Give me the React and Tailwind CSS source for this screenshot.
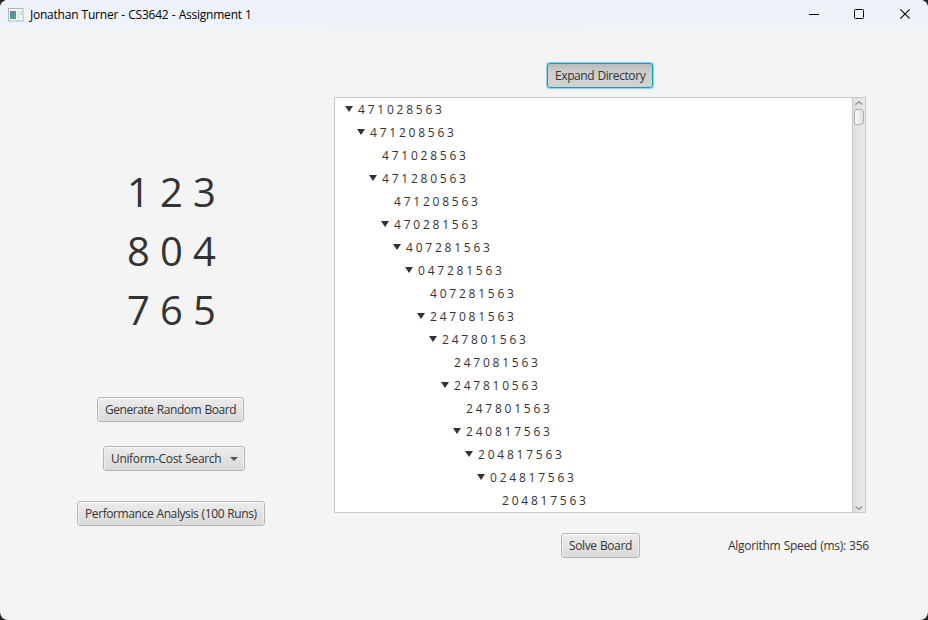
import React from "react";

const rows = [
  ["4 7 1 0 2 8 5 6 3", true, 0],
  ["4 7 1 2 0 8 5 6 3", true, 1],
  ["4 7 1 0 2 8 5 6 3", false, 2],
  ["4 7 1 2 8 0 5 6 3", true, 2],
  ["4 7 1 2 0 8 5 6 3", false, 3],
  ["4 7 0 2 8 1 5 6 3", true, 3],
  ["4 0 7 2 8 1 5 6 3", true, 4],
  ["0 4 7 2 8 1 5 6 3", true, 5],
  ["4 0 7 2 8 1 5 6 3", false, 6],
  ["2 4 7 0 8 1 5 6 3", true, 6],
  ["2 4 7 8 0 1 5 6 3", true, 7],
  ["2 4 7 0 8 1 5 6 3", false, 8],
  ["2 4 7 8 1 0 5 6 3", true, 8],
  ["2 4 7 8 0 1 5 6 3", false, 9],
  ["2 4 0 8 1 7 5 6 3", true, 9],
  ["2 0 4 8 1 7 5 6 3", true, 10],
  ["0 2 4 8 1 7 5 6 3", true, 11],
  ["2 0 4 8 1 7 5 6 3", false, 12],
];

function Button({ className, children }) {
  return (
    <button
      className={
        "flex h-[25px] shrink-0 items-center whitespace-nowrap rounded-[3px] border border-[#b5b5b5] bg-linear-to-b from-[#ececec] to-[#dadada] pl-[7px] shadow-[inset_0_1px_0_#fafafa,inset_1px_0_0_#f0f0f0,inset_-1px_0_0_#f0f0f0] " +
        className
      }
    >
      {children}
    </button>
  );
}

function TitleBar() {
  return (
    <header className="flex h-[29px] shrink-0 items-center bg-linear-to-r from-[#eef2fa] to-[#edf3f8] pl-2 text-black">
      <svg width="16" height="14" viewBox="0 0 16 14" className="mr-[6px] shrink-0">
        <defs>
          <linearGradient id="pane" x1="0" y1="0" x2="1" y2="1">
            <stop offset="0" stopColor="#4d83b0" />
            <stop offset="1" stopColor="#5ba67c" />
          </linearGradient>
        </defs>
        <rect x=".5" y=".5" width="14.5" height="12.5" fill="#f7f8f8" stroke="#b4b7ba" />
        <rect x="2" y="3" width="6" height="8" fill="url(#pane)" />
        <rect x="9" y="3" width="3" height="8" fill="#e4e8e9" />
        <rect x="12.5" y="3" width="1.5" height="4" fill="#c1dbd3" />
      </svg>
      <span className="flex-1 whitespace-nowrap text-[12px] leading-[16px] tracking-[-0.23px] [word-spacing:0.4px]">
        Jonathan Turner - CS3642 - Assignment 1
      </span>
      <svg width="120" height="29" viewBox="0 0 120 29" fill="none" stroke="#000" className="shrink-0">
        <path d="M1 14.5h10" />
        <rect x="46.5" y="9.5" width="9" height="9" rx="1" />
        <path d="M92.3 9.3l9.4 9.4M101.7 9.3l-9.4 9.4" strokeWidth="1.1" />
      </svg>
    </header>
  );
}

export default function App() {
  return (
    <div className="h-[620px] w-[928px] overflow-hidden bg-[#242424]">
      <div className="flex h-full flex-col overflow-hidden rounded-[8px] bg-[#f4f4f4] font-['Open_Sans',sans-serif] text-[12px] leading-[16px] text-[#333]">
        <TitleBar />
        <main className="flex flex-1">
          <section className="flex w-[334px] flex-col items-start pt-[133px]">
            <div className="ml-[127px] whitespace-pre text-[40px] leading-[59px] tracking-[-0.1px]">
              <div>1 2 3</div>
              <div>8 0 4</div>
              <div>7 6 5</div>
            </div>
            <Button className="mt-[58px] ml-[97px] w-[147px] tracking-[-0.44px] [word-spacing:0.5px]">Generate Random Board</Button>
            <Button className="mt-[24px] ml-[103px] w-[142px] tracking-[-0.34px] [word-spacing:0.5px]">
              <span className="w-[119px] text-left">Uniform-Cost Search</span>
              <svg width="8" height="4" viewBox="0 0 8 4">
                <path d="M0 0h8L4 4z" fill="#555" />
              </svg>
            </Button>
            <Button className="mt-[30px] ml-[77px] w-[188px] tracking-[-0.4px] [word-spacing:0.5px]">Performance Analysis (100 Runs)</Button>
          </section>
          <section className="flex w-[594px] flex-col pt-[34px]">
            <button className="ml-[213px] flex h-[25px] w-[106px] shrink-0 items-center whitespace-nowrap rounded-[3px] border border-[#039ed3] bg-linear-to-b from-[#b9b9b9] via-[#cdcdcd] via-30% to-[#d2d2d2] pl-[7px] tracking-[-0.41px] shadow-[0_0_1px_1px_#8bcfe5] [word-spacing:0.5px]">
              Expand Directory
            </button>
            <div className="mt-[9px] flex h-[416px] w-[532px] shrink-0 border border-[#c8c8c8] bg-white">
              <div className="flex-1 overflow-hidden">
                {rows.map(([label, open, depth], i) => (
                  <div key={i} className="flex h-[23px] items-center" style={{ paddingLeft: 10 + depth * 12 }}>
                    <span className="mb-px w-[13px] shrink-0">
                      {open && (
                        <svg width="8" height="6" viewBox="0 0 8 6" className="block">
                          <path d="M0 0h8L4 6z" fill="#333" />
                        </svg>
                      )}
                    </span>
                    <span className="whitespace-nowrap tracking-[-0.17px]">{label}</span>
                  </div>
                ))}
              </div>
              <div className="flex w-[13px] shrink-0 flex-col items-center border-l border-[#c8c8c8] bg-linear-to-r from-[#dedede] to-[#ebebeb] pt-[3px] pb-[2px]">
                <svg width="8" height="4" viewBox="0 0 8 4" fill="none" stroke="#909090" strokeWidth="1.3">
                  <path d="M.5 3.6L4 .8l3.500 2.800" />
                </svg>
                <div className="mt-[4px] h-[16px] w-[10px] rounded-[3px] border border-[#b0b0b0] bg-linear-to-r from-[#fafafa] to-[#dedede]" />
                <svg width="8" height="4" viewBox="0 0 8 4" fill="none" stroke="#909090" strokeWidth="1.3" className="mt-auto">
                  <path d="M.5 .4L4 3.200 7.500 .4" />
                </svg>
              </div>
            </div>
            <div className="mt-[20px] ml-[227px] flex items-center">
              <Button className="w-[79px] tracking-[-0.38px] [word-spacing:0.5px]">Solve Board</Button>
              <span className="ml-[88px] whitespace-nowrap tracking-[-0.3px] [word-spacing:0.5px]">Algorithm Speed (ms): 356</span>
            </div>
          </section>
        </main>
      </div>
    </div>
  );
}
